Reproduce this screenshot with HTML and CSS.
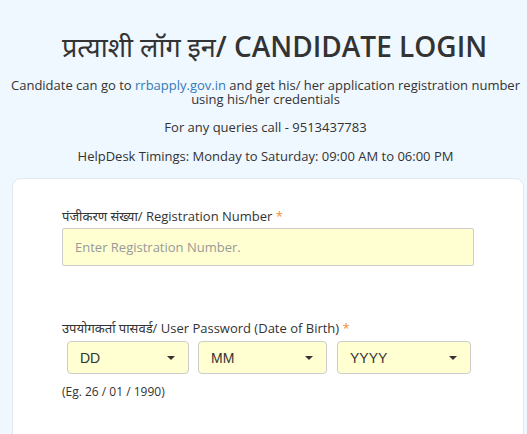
FILE: index.html
```html
<!DOCTYPE html>
<html lang="hi">
<head>
<meta charset="utf-8">
<title>Candidate Login</title>
<link rel="stylesheet" href="styles.css">
</head>
<body>
<div class="page">
  <header class="intro">
    <h1 class="title"><span class="title-hi">प्रत्याशी लॉग इन</span>/ CANDIDATE LOGIN</h1>
    <p class="note">Candidate can go to <a class="link" href="#">rrbapply.gov.in</a> and get his/ her application registration number using his/her credentials</p>
    <p class="info">For any queries call - 9513437783</p>
    <p class="info">HelpDesk Timings: Monday to Saturday: 09:00 AM to 06:00 PM</p>
  </header>
  <main class="card">
    <div class="field">
      <label class="label">पंजीकरण संख्या/ Registration Number <span class="req">*</span></label>
      <div class="input">Enter Registration Number.</div>
    </div>
    <div class="field field-pass">
      <label class="label">उपयोगकर्ता पासवर्ड/ User Password (Date of Birth) <span class="req">*</span></label>
      <div class="dob">
        <div class="sel sel-dd"><span>DD</span><svg class="caret" width="8" height="4" viewBox="0 0 8 4"><path d="M0 0H8L4 4Z" fill="#333"/></svg></div>
        <div class="sel sel-mm"><span>MM</span><svg class="caret" width="8" height="4" viewBox="0 0 8 4"><path d="M0 0H8L4 4Z" fill="#333"/></svg></div>
        <div class="sel sel-yy"><span>YYYY</span><svg class="caret" width="8" height="4" viewBox="0 0 8 4"><path d="M0 0H8L4 4Z" fill="#333"/></svg></div>
      </div>
      <div class="hint">(Eg. 26 / 01 / 1990)</div>
    </div>
  </main>
</div>
</body>
</html>
```
FILE: styles.css
```css
* { box-sizing: border-box; }
html, body { margin: 0; padding: 0; }
body {
  background: #eff7ff;
  font-family: "Open Sans", "Noto Sans", sans-serif;
  color: #333;
  overflow: hidden;
}
.page { display: flex; flex-direction: column; }
.intro { text-align: center; padding: 26px 0 0 4px; }
.title {
  margin: 0;
  padding-left: 18px;
  height: 40px;
  font-size: 28px;
  font-weight: 600;
  line-height: 40px;
  color: #333;
}
.title-hi { font-weight: 400; font-size: 27px; line-height: 1; }
.note {
  margin: 12px 0 0;
  font-size: 13px;
  line-height: 14px;
}
.link { color: #337ab7; text-decoration: none; }
.info {
  margin: 14px 0 0;
  font-size: 13px;
  line-height: 15px;
}
.info + .info { margin-top: 14px; }
.card {
  margin: 14px 3px 0 12px;
  background: #fff;
  border: 1px solid #e3e8ee;
  border-radius: 9px;
  padding: 28px 49px 40px;
  display: flex;
  flex-direction: column;
  gap: 53px;
  min-height: 300px;
}
.field { display: flex; flex-direction: column; }
.label {
  font-size: 13px;
  line-height: 18px;
  color: #333;
  margin-bottom: 3px;
}
.req { color: #f0903a; }
.input {
  height: 38px;
  background: #ffffd2;
  border: 1px solid #ccc;
  border-radius: 2px;
  padding: 0 12px;
  display: flex;
  align-items: center;
  font-size: 13px;
  color: #999;
}
.dob {
  display: flex;
  gap: 9px;
  padding-left: 5px;
  margin-top: 1px;
}
.sel {
  height: 33px;
  background: #ffffd2;
  border: 1px solid #ccc;
  border-radius: 4px;
  display: flex;
  align-items: center;
  justify-content: space-between;
  padding: 0 13px 0 12px;
  font-family: "Liberation Sans", Arial, sans-serif;
  font-size: 14px;
  color: #333;
}
.sel-dd { width: 122px; }
.sel-mm { width: 129px; margin-right: 1px; }
.sel-yy { width: 134px; }
.caret { display: block; }
.hint {
  margin-top: 10px;
  font-size: 12px;
  line-height: 16px;
  color: #333;
}
```
